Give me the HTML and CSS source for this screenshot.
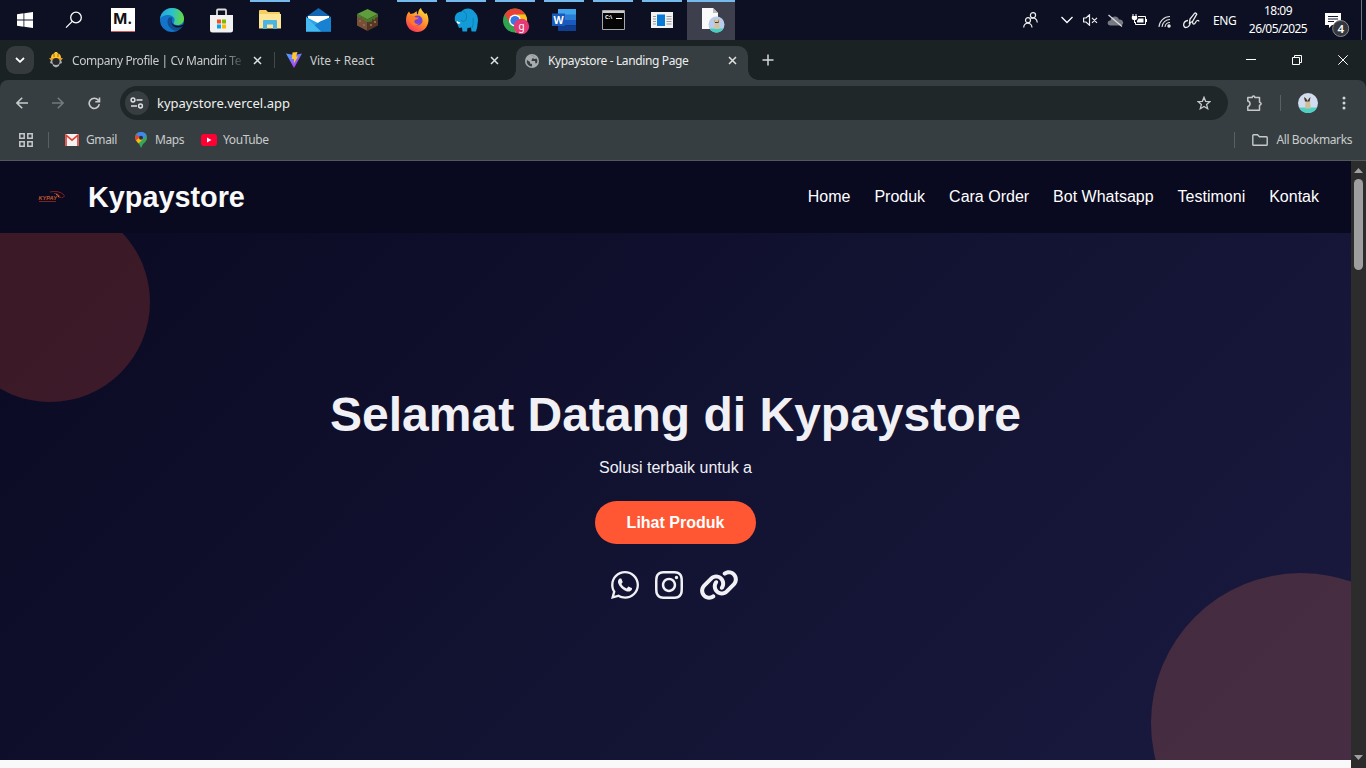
FILE: index.html
```html
<!DOCTYPE html>
<html lang="id">
<head>
<meta charset="utf-8">
<title>Kypaystore - Landing Page</title>
<link rel="stylesheet" href="styles.css">
</head>
<body>
<div class="taskbar">
  <div class="apps">
    <div class="app"><svg width="16" height="16" viewBox="0 0 16 16" fill="#fff"><path d="M0 2.3 6.5 1.3V7.6H0zM7.3 1.2 16 0V7.6H7.3zM0 8.4H6.5V14.7L0 13.8zM7.3 8.4H16V16L7.3 14.8z"/></svg></div>
    <div class="app"><svg width="18" height="18" viewBox="0 0 18 18" fill="none" stroke="#fff" stroke-width="1.3"><circle cx="11" cy="6.5" r="5.3"/><path d="M7.2 10.4 1 16.6"/></svg></div>
    <div class="app"><span class="m-logo">M.</span></div>
    <div class="app"><svg width="24" height="24" viewBox="0 0 24 24"><defs><linearGradient id="eg" x1="0" y1=".3" x2="1" y2=".4"><stop offset="0" stop-color="#25a5dd"/><stop offset=".5" stop-color="#2bc2c9"/><stop offset="1" stop-color="#64d83f"/></linearGradient></defs><circle cx="12" cy="12" r="12" fill="#1474c8"/><path d="M0 11C1 4 6 0 12 0c7 0 12 5 12 10.500 0 4-3 6.500-6.500 6.500-3 0-4.500-1.500-3.500-3 2-3-1-7-5.500-7C4 7 1 9 0 11z" fill="url(#eg)"/><path d="M8.500 10C5 16 11 23 17 22.800c3-1.200 4.500-3 5.700-4.700-5 2.500-11 .8-11.400-4.600-.1-1.600.5-2.700 1.200-3.500C11 9 9.500 9 8.500 10z" fill="#104d94"/><path d="M12.800 10c-1.600 1.500-1.600 5 1 6.700 2.400 1.600 6 1.300 8.800-.2l.9.800-.8 1c-5 3-11 .5-11.400-4.500-.1-1.600.5-3 1.500-3.800z" fill="#0c1229"/></svg></div>
    <div class="app"><svg width="24" height="25" viewBox="0 0 24 25"><path d="M8 8V2.500Q8 1.500 9 1.500H16Q17 1.500 17 2.500V8" fill="none" stroke="#ddd" stroke-width="1.800"/><path d="M1 7H24V22Q24 24.500 21.500 24.500H3.500Q1 24.500 1 22z" fill="#f1f1f1"/><path d="M8 11.500h4v4H8z" fill="#f25022"/><path d="M13 11.500h4v4h-4z" fill="#7fba00"/><path d="M8 16.500h4v4H8z" fill="#00a4ef"/><path d="M13 16.500h4v4h-4z" fill="#ffb900"/></svg></div>
    <div class="app open"><svg width="22" height="20" viewBox="0 0 22 20"><path d="M0 1Q0 0 1 0H7L9 2H20Q21 2 21 3V18H0z" fill="#f6ce60"/><path d="M0 4H22V18.500H0z" fill="#ffe696"/><path d="M4 19V11Q4 10 5 10H17Q18 10 18 11V19H14V14.500H8V19z" fill="#4bb4e0"/></svg></div>
    <div class="app"><svg width="25" height="24" viewBox="0 0 25 24"><path d="M0 9 12.500 0 25 9z" fill="#1467b4"/><path d="M2 8H23V15H2z" fill="#fff"/><path d="M0 9 12 15 25 9V23.500H0z" fill="#29a5e8"/><path d="M0 23.500 14 13.500 25 9V23.500z" fill="#1782d2"/><path d="M0 9 15 23.500H0z" fill="#45baf0"/></svg></div>
    <div class="app"><svg width="21" height="22" viewBox="0 0 21 22"><path d="M0 5 10.500 0 21 5 10.500 10.500z" fill="#5f9c3c"/><path d="M0 5 10.500 10.500V22L0 16.500z" fill="#785038"/><path d="M21 5 10.500 10.500V22L21 16.500z" fill="#543623"/><path d="M0 5 10.500 10.500 21 5V8L18 9V11L15 10V12.500L10.500 13 8 12V10.500L5 10.500V8L2 9 0 7z" fill="#477b2c"/><path d="M2 11h2v2H2zM6 15h2v2H6zM13 17h2v-2h-2zM17 12h2v2h-2z" fill="#8e6a4d"/></svg></div>
    <div class="app open"><svg width="24" height="24" viewBox="0 0 24 24"><defs><linearGradient id="fg" x1=".8" y1="0" x2=".2" y2="1"><stop offset="0" stop-color="#ffe13a"/><stop offset=".5" stop-color="#ff8a2b"/><stop offset="1" stop-color="#f7305d"/></linearGradient></defs><path d="M1 12C1 8.500 2 5.500 4 3.500L5.500 6 9 5.300C10 4 11 3.500 12 3.500 11.500 5 12 6 13 6.500 13 3.500 14 1 16 0c.5 3 3 4 4 6l1.500-1C23 8 23.500 10 23.500 12.500 23 19.500 18 24 12.300 24 6 24 1 19 1 12z" fill="url(#fg)"/><circle cx="12.500" cy="12.500" r="5" fill="#7542d6"/><path d="M4 8C7 6.500 9 8 11 9.500H14C13 11 11.500 11.500 10 12 8 14 11 17 14 15.500 11 19.500 4 17.500 4 8z" fill="#ff7a2c"/></svg></div>
    <div class="app open"><svg width="25" height="24" viewBox="0 0 25 24"><path d="M1 13C0 7 3 4 7.500 3.500 10-.5 18-1 20.500 4c3.500 3 4 8 3 12 0 3-1 5-1.500 7.500H17.500L17 19.500 13.500 20 13 23.500H8.500L8 19.500 5 20 3 15z" fill="#139bd7"/><path d="M9 3Q14 5 12 12 9 15 7 12M19 10Q20 16 18 20" fill="none" stroke="#0c78ad" stroke-width=".8"/><path d="M3 13.500Q4.500 16 6 14.500" stroke="#fff" stroke-width="1.500" fill="none"/></svg></div>
    <div class="app open"><svg class="shift" width="27" height="27" viewBox="0 0 27 27"><circle cx="12" cy="12.500" r="12" fill="#31a350"/><path d="M1.600 6.500A12 12 0 0 1 22.400 6.500L12 7 7 15z" fill="#e94235"/><path d="M22.400 6.500A12 12 0 0 1 12 24.500L17.500 14 14 6.500z" fill="#fbc116"/><circle cx="12" cy="12.500" r="6" fill="#fff"/><circle cx="12" cy="12.500" r="4.600" fill="#3478e6"/><circle cx="18.500" cy="18.500" r="7.700" fill="#e43b77"/><text x="18.500" y="21.500" text-anchor="middle" font-size="10" fill="#fff">g</text></svg></div>
    <div class="app open"><svg width="24" height="22" viewBox="0 0 24 22"><path d="M6 0H24V6H6z" fill="#41a5ee"/><path d="M6 5.500H24V11H6z" fill="#2b7cd3"/><path d="M6 11H24V16.500H6z" fill="#185abd"/><path d="M6 16.500H24V22H6z" fill="#103f91"/><path d="M0 4.500H13V17H0z" fill="#185abd"/><text x="6.500" y="14.500" text-anchor="middle" font-size="10.500" font-weight="700" fill="#fff">W</text></svg></div>
    <div class="app open"><svg width="23" height="20" viewBox="0 0 23 20"><path d="M.5.500H22.500V19.500H.5z" fill="#050505" stroke="#a8a8a8"/><path d="M1 1H22V3H1z" fill="#ccc"/><text x="3" y="9" font-size="5.500" font-weight="700" fill="#fff">C:\</text><path d="M14 8.500h6" stroke="#fff"/></svg></div>
    <div class="app open"><svg width="22" height="16" viewBox="0 0 22 16"><path d="M0 0H22V16H0z" fill="#f2f2f2"/><path d="M6 2.500H14V14H6z" fill="#0879d6"/><path d="M2 4.500h3M2 7h3M2 9.500h3M2 12h3M15.500 4.500h5M15.500 7h5M15.500 9.500h5M15.500 12h5" stroke="#999"/></svg></div>
    <div class="app open active"><svg class="doc" width="24" height="25" viewBox="0 0 24 25"><path d="M1 0H12L17 5V21H1z" fill="#fafafa"/><path d="M12 0V5H17z" fill="#bbb"/><circle cx="15.500" cy="16.500" r="8" fill="#b9cce9"/><path d="M8.500 20.500H22.500A8 8 0 0 1 8.500 20.500z" fill="#45cec2"/><path d="M12 10 14 12H17L19 10 18 15 18.500 21H13L14 15z" fill="#d5c29d"/><path d="M13 11 14 14H17L18 11 17.500 15H14z" fill="#49392f"/></svg></div>
  </div>
  <div class="tray">
    <svg class="people" width="15" height="16" viewBox="0 0 15 16" fill="none" stroke="#eee" stroke-width="1.200"><circle cx="10" cy="3.200" r="2.600"/><circle cx="5" cy="8.200" r="2.500"/><path d="M.7 15.500C1 9.800 8.500 9.800 9 15.500M8.300 6.500C11 5 14 6.500 14.300 10.500"/></svg>
    <svg class="chev" width="12" height="8" viewBox="0 0 12 8" fill="none" stroke="#fff" stroke-width="1.300"><path d="M.5 1 6 6.500 11.500 1"/></svg>
    <svg class="vol" width="15" height="12" viewBox="0 0 15 12" fill="none" stroke="#eee" stroke-width="1.200"><path d="M.6 4H3L6.500.8V11.200L3 8H.6zM9 3.800l5 5M14 3.800l-5 5"/></svg>
    <svg class="cloud" width="17" height="13" viewBox="0 0 17 13"><path d="M3.500 11.500C-.5 11.500 0 6 3.500 6.500 4 1.500 11 1 12 5.500c5-.5 5.500 6 1.500 6z" fill="#777a83"/><path d="M1.500 1 15 12.500" stroke="#ddd" stroke-width="1.200"/></svg>
    <svg class="bat" width="16" height="13" viewBox="0 0 16 13"><path d="M7 2.500H14.500V10.500H4.500V8M15.500 5v3M1 2.500h5M2 0v2.500M5 0v2.500M3.500 5v4" fill="none" stroke="#fff"/><path d="M.8 2.500H6.200V4.500Q6 6.300 3.500 6.300T.8 4.500zM7.500 4.500H12.500V8.500H6V7z" fill="#fff"/></svg>
    <svg class="wifi" width="13" height="13" viewBox="0 0 13 13" fill="none" stroke="#ddd" stroke-width="1.100"><path d="M1 12A11 11 0 0 1 12 1.500M4 12A8 8 0 0 1 12 4.500M7 12A5 5 0 0 1 12 7.500"/><circle cx="11" cy="11" r="1.200" fill="#fff"/></svg>
    <svg class="pen" width="17" height="17" viewBox="0 0 17 17" fill="none" stroke="#eee" stroke-width="1.300"><path d="M6.500 11 7 7 11.300 1.600Q13 .2 13.800 2.200L9.500 9.500zM5 8.500C-.5 9 0 15.200 2.500 15.500 6 15.500 7 13 7.500 10M9.500 9.500C9.500 13 11.500 12.500 12.500 10.500 13.500 8.500 15.500 7.500 16 9.500"/></svg>
    <span class="lang">ENG</span>
    <div class="clock"><span>18:09</span><span>26/05/2025</span></div>
    <svg class="notif" width="25" height="25" viewBox="0 0 25 25"><path d="M0 0H16V12H7L4 15V12H0z" fill="#fff"/><path d="M3 3.500h10M3 6h10M3 8.500h6" stroke="#151a30"/><circle cx="15.700" cy="15.500" r="8" fill="#35373e" stroke="#888"/><text x="15.700" y="19.800" text-anchor="middle" font-size="11.500" font-weight="600" fill="#fff">4</text></svg>
    <i class="peek"></i>
  </div>
</div>

<div class="tabs">
  <div class="tabsearch"><svg width="10" height="6" viewBox="0 0 10 6" fill="none" stroke="#fff" stroke-width="1.800"><path d="M1 1 5 4.800 9 1"/></svg></div>
  <div class="tab t1"><svg width="14" height="16" viewBox="0 0 14 16"><path d="M2 6Q2 2 5 1.500L6 0H8L9 1.500Q12 2 12 6z" fill="#ffc52b"/><path d="M5 2V5M9 2V5" stroke="#a8621c"/><path d="M0 6H14L12 8.500H2z" fill="#f09c24"/><path d="M2 8H12L13 11 10.500 12 10 14 7 15.500 4 14 3.500 12 1 11z" fill="#aab1b4"/><circle cx="7" cy="9.500" r="3.600" fill="#26292a"/></svg><span class="title fade">Company Profile | Cv Mandiri Te</span><svg class="x" width="9" height="9" viewBox="0 0 9 9"><path d="M1 1 8 8M8 1 1 8"/></svg></div>
  <i class="tabsep"></i>
  <div class="tab t2"><svg width="16" height="16" viewBox="0 0 16 16"><defs><linearGradient id="vg" x1="0" y1="0" x2=".6" y2="1"><stop offset="0" stop-color="#41a9ff"/><stop offset="1" stop-color="#bd34fe"/></linearGradient></defs><path d="M0 1.500 8 3 16 1.500 8 16z" fill="url(#vg)"/><path d="M6.500.5 11.500 0 10 4.500H12L7.800 11.500 8 7H5.800z" fill="#ffc72d"/></svg><span class="title">Vite + React</span><svg class="x" width="9" height="9" viewBox="0 0 9 9"><path d="M1 1 8 8M8 1 1 8"/></svg></div>
  <div class="tab t3"><svg width="14" height="14" viewBox="0 0 14 14"><circle cx="7" cy="7" r="7" fill="#a7acae"/><path d="M2 6 5 8V9.500L7 10V12.500C3.500 12.500 1 9.500 2 6zM6 2Q9 1 9 3L7 5 6.500 7H10L10.500 9.500 12 9Q13 6 11.500 4.500L9 5 8 4 9.500 2z" fill="#373e41"/></svg><span class="title">Kypaystore - Landing Page</span><svg class="x" width="9" height="9" viewBox="0 0 9 9"><path d="M1 1 8 8M8 1 1 8"/></svg></div>
  <svg class="plus" width="12" height="12" viewBox="0 0 12 12"><path d="M6 .5V11.500M.5 6H11.500" stroke="#d5d8d8" stroke-width="1.500"/></svg>
  <div class="winctl">
    <svg width="10" height="10" viewBox="0 0 10 10"><path d="M0 4.500H10"/></svg>
    <svg width="10" height="10" viewBox="0 0 10 10"><path d="M.5 2.500H7.500V9.500H.5zM2.500 2.500V.5H9.500V7.500H7.500"/></svg>
    <svg width="10" height="10" viewBox="0 0 10 10"><path d="M.3.300 9.700 9.700M9.700.300.3 9.700"/></svg>
  </div>
</div>

<div class="chrome">
  <div class="toolbar">
    <div class="navbtns">
      <svg width="12" height="12" viewBox="0 0 12 12"><path d="M12 6H1M6.200.700.9 6 6.200 11.300"/></svg>
      <svg class="dim" width="12" height="12" viewBox="0 0 12 12"><path d="M0 6H11M5.800.700 11.100 6 5.800 11.300"/></svg>
      <svg width="13" height="13" viewBox="0 0 13 13"><path d="M11.300 7.200A5.100 5.100 0 1 1 10.300 3.200L11.500 4.600M11.500.5V4.800H7.300"/></svg>
    </div>
    <div class="omni">
      <span class="site"><svg width="14" height="12" viewBox="0 0 14 12" fill="none" stroke="#dde0e0" stroke-width="1.500"><circle cx="3" cy="3" r="1.900"/><path d="M6.500 3H12.500M1 9H7"/><circle cx="10.500" cy="9" r="1.900"/></svg></span>
      <span class="url">kypaystore.vercel.app</span>
      <svg class="star" width="14" height="14" viewBox="0 0 14 14" fill="none" stroke="#c5c9ca" stroke-width="1.300"><path d="M7 1.300 8.600 5.300 12.900 5.600 9.600 8.400 10.700 12.700 7 10.400 3.300 12.700 4.400 8.400 1.100 5.600 5.400 5.300z"/></svg>
    </div>
    <svg class="ext" width="17" height="17" viewBox="0 0 17 17" fill="none" stroke="#c5c9ca" stroke-width="1.500" stroke-linejoin="round"><path d="M1.800 2.500H6.200V2Q7.500.2 8.800 2V2.500H13.500V7.300H14Q16.300 8.700 14 10.200H13.500V15.200H1.800V11.600Q4 11 4 8.800T1.800 6z"/></svg>
    <i class="sep"></i>
    <svg class="avatar" width="20" height="20" viewBox="0 0 20 20"><circle cx="10" cy="10" r="10" fill="#d1dcf0"/><path d="M1 14.500H19A10 10 0 0 1 1 14.500z" fill="#50d0c4"/><path d="M6 4 8.500 6.500H10.500L12.500 4 12 9 13 15.500H7L7.500 9z" fill="#d0be9b"/><path d="M6 4 8 5.500 9.500 8 11 5.500 12.500 4 11.500 8.500H7z" fill="#40352c"/></svg>
    <svg class="dots" width="4" height="14" viewBox="0 0 4 14" fill="#d2d5d5"><circle cx="2" cy="2" r="1.500"/><circle cx="2" cy="7" r="1.500"/><circle cx="2" cy="12" r="1.500"/></svg>
  </div>
  <div class="bookmarks">
    <svg width="14" height="14" viewBox="0 0 14 14" fill="none" stroke="#c5c9ca" stroke-width="1.500"><path d="M.8.800H5.200V5.200H.8zM8.800.800H13.200V5.200H8.800zM.8 8.800H5.200V13.200H.8zM8.800 8.800H13.200V13.200H8.800z"/></svg>
    <i class="sep"></i>
    <span class="bm b1"><svg width="14" height="12" viewBox="0 0 14 12"><path d="M0 0H14V12H0z" fill="#f4f1f1"/><path d="M1 12V1.200L7 6.200 13 1.200V12" fill="none" stroke="#d8453b" stroke-width="1.700"/></svg>Gmail</span>
    <span class="bm b2"><svg width="12" height="16" viewBox="0 0 12 16"><path d="M6 0Q12 0 12 6 12 9 8 12L6 16Q5 12 2 9.500 0 7 0 5.500 0 0 6 0z" fill="#34a853"/><path d="M1 3Q3 0 6 0 10 0 11.500 3.500L4 11 1.500 9z" fill="#4285f4"/><path d="M1.500 2.500 5 5.500 1 9Q-1 5 1.500 2.500z" fill="#ea4335"/><path d="M1 8.500 5 5 8 7 3.500 11.500z" fill="#fbbc04"/><circle cx="6" cy="5.700" r="2" fill="#283239"/></svg>Maps</span>
    <span class="bm b3"><svg width="16" height="12" viewBox="0 0 16 12"><rect width="16" height="12" rx="3" fill="#ff0033"/><path d="M6 3.500V8.500L10.500 6z" fill="#fff"/></svg>YouTube</span>
    <div class="allbm"><i class="sep"></i><svg width="16" height="12" viewBox="0 0 16 12" fill="none" stroke="#c5c9ca" stroke-width="1.400"><path d="M.8 1.500Q.8.700 1.500.7H5.500L7.500 2.700H14.500Q15.200 2.700 15.200 3.500V10.500Q15.200 11.300 14.500 11.300H1.500Q.8 11.300.8 10.500z"/></svg><span>All Bookmarks</span></div>
  </div>
</div>

<div class="viewport">
  <div class="page">
    <header class="navbar">
      <svg class="logo" width="30" height="14" viewBox="0 0 30 14"><text x="1.500" y="9.800" font-size="5.600" font-weight="700" font-style="italic" fill="#c45a2d">KYPAY</text><path d="M13 2Q22 0 27 5M17 3.500Q22 3 23.500 8M2 11.500H19M24.500 8Q26 7.500 28 5.500" fill="none" stroke="#8c261f" stroke-width=".9"/><path d="M19 4.500Q21 4 22 7.500" stroke="#d37a38" fill="none"/></svg>
      <h2 class="brand">Kypaystore</h2>
      <nav class="links"><a>Home</a><a>Produk</a><a>Cara Order</a><a>Bot Whatsapp</a><a>Testimoni</a><a>Kontak</a></nav>
    </header>
    <section class="hero">
      <i class="circle c1"></i><i class="circle c2"></i>
      <h1>Selamat Datang di Kypaystore</h1>
      <p>Solusi terbaik untuk a</p>
      <a class="btn">Lihat Produk</a>
      <div class="social">
        <svg width="28" height="32" viewBox="0 0 448 512"><path d="M380.900 97.100C339 55.100 283.200 32 223.900 32c-122.400 0-222 99.600-222 222 0 39.100 10.200 77.300 29.600 111L0 480l117.700-30.900c32.400 17.700 68.900 27 106.100 27h.1c122.300 0 224.100-99.600 224.100-222 0-59.300-25.200-115-67.100-157zm-157 341.600c-33.200 0-65.700-8.900-94-25.700l-6.700-4-69.800 18.300L72 359.200l-4.400-7c-18.500-29.400-28.200-63.300-28.200-98.200 0-101.700 82.800-184.500 184.600-184.500 49.300 0 95.600 19.200 130.400 54.100 34.800 34.900 56.200 81.200 56.100 130.500 0 101.800-84.900 184.600-186.600 184.600zm101.200-138.200c-5.500-2.800-32.800-16.200-37.900-18-5.100-1.900-8.800-2.800-12.500 2.800-3.700 5.600-14.300 18-17.600 21.800-3.200 3.700-6.500 4.200-12 1.400-32.600-16.300-54-29.100-75.500-66-5.700-9.800 5.700-9.100 16.300-30.300 1.800-3.700.9-6.900-.5-9.700-1.400-2.800-12.500-30.100-17.100-41.200-4.500-10.800-9.100-9.300-12.500-9.500-3.200-.2-6.900-.2-10.600-.2-3.700 0-9.700 1.400-14.800 6.900-5.100 5.600-19.400 19-19.400 46.300 0 27.300 19.900 53.700 22.600 57.400 2.800 3.700 39.100 59.700 94.800 83.800 35.200 15.200 49 16.500 66.600 13.900 10.700-1.600 32.800-13.400 37.400-26.400 4.600-13 4.600-24.100 3.200-26.400-1.300-2.500-5-3.900-10.500-6.600z"/></svg>
        <svg width="28" height="32" viewBox="0 0 448 512"><path d="M224.100 141c-63.600 0-114.900 51.300-114.900 114.900s51.300 114.900 114.900 114.900S339 319.500 339 255.900 287.700 141 224.100 141zm0 189.600c-41.100 0-74.700-33.500-74.700-74.700s33.500-74.700 74.700-74.700 74.700 33.500 74.700 74.700-33.600 74.700-74.700 74.700zm146.400-194.300c0 14.900-12 26.800-26.800 26.800-14.900 0-26.800-12-26.800-26.800s12-26.800 26.800-26.800 26.800 12 26.800 26.800zm76.100 27.200c-1.700-35.900-9.900-67.700-36.200-93.900-26.200-26.200-58-34.400-93.900-36.200-37-2.100-147.900-2.100-184.900 0-35.800 1.700-67.600 9.900-93.900 36.100s-34.400 58-36.200 93.900c-2.100 37-2.100 147.900 0 184.900 1.700 35.900 9.900 67.700 36.200 93.900s58 34.400 93.900 36.200c37 2.100 147.900 2.100 184.900 0 35.900-1.700 67.700-9.900 93.900-36.200 26.200-26.200 34.400-58 36.200-93.900 2.100-37 2.100-147.800 0-184.800zM398.800 388c-7.800 19.600-22.900 34.700-42.600 42.600-29.500 11.700-99.500 9-132.100 9s-102.700 2.600-132.100-9c-19.600-7.800-34.700-22.900-42.600-42.600-11.700-29.500-9-99.500-9-132.100s-2.600-102.700 9-132.100c7.800-19.600 22.900-34.700 42.600-42.600 29.500-11.700 99.500-9 132.100-9s102.700-2.600 132.100 9c19.600 7.800 34.700 22.900 42.600 42.600 11.700 29.500 9 99.500 9 132.100s2.700 102.700-9 132.100z"/></svg>
        <svg width="40" height="32" viewBox="0 0 640 512"><path d="M579.800 267.700c56.500-56.500 56.500-148 0-204.500c-50-50-128.800-56.500-186.300-15.400l-1.600 1.100c-14.400 10.300-17.700 30.300-7.400 44.600s30.300 17.700 44.600 7.400l1.600-1.100c32.100-22.900 76-19.300 103.800 8.600c31.500 31.500 31.500 82.500 0 114L422.300 334.800c-31.500 31.500-82.500 31.500-114 0c-27.900-27.900-31.500-71.800-8.600-103.800l1.100-1.600c10.300-14.400 6.900-34.400-7.400-44.600s-34.400-6.900-44.600 7.400l-1.100 1.600C206.500 251.200 213 330 263 380c56.500 56.500 148 56.500 204.500 0L579.800 267.700zM60.200 244.300c-56.500 56.500-56.500 148 0 204.500c50 50 128.800 56.500 186.300 15.400l1.600-1.100c14.400-10.300 17.700-30.300 7.400-44.600s-30.300-17.700-44.600-7.400l-1.600 1.100c-32.100 22.900-76 19.300-103.800-8.600C74 372 74 321 105.500 289.500L217.700 177.200c31.500-31.500 82.500-31.500 114 0c27.900 27.900 31.500 71.800 8.600 103.900l-1.100 1.600c-10.300 14.400-6.900 34.400 7.400 44.600s34.400 6.900 44.600-7.400l1.100-1.600C433.500 260.800 427 182 377 132c-56.500-56.500-148-56.500-204.500 0L60.200 244.300z"/></svg>
      </div>
    </section>
  </div>
  <div class="scroll">
    <svg width="9" height="5" viewBox="0 0 9 5" fill="#a0a0a0"><path d="M0 5 4.500 0 9 5z"/></svg>
    <i class="thumb"></i>
    <svg class="down" width="9" height="5" viewBox="0 0 9 5" fill="#a0a0a0"><path d="M0 0 4.500 5 9 0z"/></svg>
  </div>
</div>
</body>
</html>
```
FILE: styles.css
```css
* { box-sizing: border-box; }
body { margin: 0; width: 1366px; height: 768px; overflow: hidden; display: flex; flex-direction: column; font-family: "Noto Sans", "Open Sans", sans-serif; font-size: 12px; color: #e3e5e5; background: #1b2224; }
svg { flex: none; display: block; }
i { display: block; flex: none; }

.taskbar { height: 40px; flex: none; background: #0c1022; display: flex; justify-content: space-between; }
.apps { display: flex; gap: 1.050px; padding-left: .6px; }
.app { width: 48px; height: 40px; display: flex; align-items: center; justify-content: center; }
.app.open { background: linear-gradient(#76b9ed, #76b9ed) center top / 40px 2px no-repeat; }
.app.active { background: linear-gradient(#76b9ed, #76b9ed) center top / 48px 2px no-repeat, #3d3f4c; }
.shift { margin: 2px 0 0 3px; }
.doc { margin: 1px 0 0 4px; }
.m-logo { width: 24px; height: 24px; background: #fff; color: #111; border-bottom: 1px solid #e25555; font: 700 15px/22px Inter, sans-serif; text-align: center; }
.tray { display: flex; align-items: center; color: #fff; }
.chev { margin-left: 23px; }
.vol { margin-left: 10px; }
.cloud { margin-left: 9px; }
.bat { margin-left: 7px; }
.wifi { margin-left: 11px; margin-top: 2px; }
.pen { margin-left: 12px; }
.lang { margin-left: 13px; width: 24px; letter-spacing: -.4px; }
.clock { width: 60px; margin-left: 11px; display: flex; flex-direction: column; align-items: center; line-height: 18px; letter-spacing: -.55px; white-space: nowrap; }
.notif { margin: 10px 0 0 17px; }
.peek { width: 1px; height: 40px; background: #70727d; margin: 0 4px 0 11px; }

.tabs { height: 40px; flex: none; display: flex; align-items: center; background: #1b2224; }
.tabsearch { width: 28px; height: 28px; margin: 0 0 0 6px; border-radius: 9px; background: #353b3d; display: flex; align-items: center; justify-content: center; }
.tab { height: 34px; display: flex; align-items: center; }
.title { flex: 1; margin-left: 9px; white-space: nowrap; color: #c8cccc; letter-spacing: -.37px; line-height: 18px; padding-top: 1px; }
.fade { -webkit-mask-image: linear-gradient(90deg, #000 88%, transparent 103%); mask-image: linear-gradient(90deg, #000 88%, transparent 103%); letter-spacing: -.42px; }
.x { fill: none; stroke: #dfe2e2; stroke-width: 1.500; }
.t1 { width: 212px; margin-left: 15px; }
.t1 .x { margin-left: 12px; }
.tabsep { width: 1px; height: 16px; background: #43494b; margin-left: 13px; }
.t2 { width: 213px; margin-left: 11px; }
.t2 .title { margin-left: 8px; letter-spacing: -.1px; }
.t3 { align-self: flex-end; width: 232px; margin-left: 17px; padding: 0 11px 5px 9px; background: #373e41; border-radius: 10px 10px 0 0; position: relative; }
.t3::before, .t3::after { content: ""; position: absolute; bottom: 0; width: 10px; height: 10px; }
.t3::before { left: -10px; background: radial-gradient(circle at 0 0, transparent 9.500px, #373e41 10px); }
.t3::after { right: -10px; background: radial-gradient(circle at 100% 0, transparent 9.500px, #373e41 10px); }
.t3 .title { color: #eceeee; padding-top: 0; }
.plus { margin-left: 14px; }
.winctl { margin-left: auto; display: flex; gap: 36px; padding-right: 18px; fill: none; stroke: #fff; stroke-width: 1; }

.chrome { height: 81px; flex: none; background: #373e41; border-bottom: 1px solid #53595b; border-top-right-radius: 8px; border-top-left-radius: 8px; }
.toolbar { height: 46px; display: flex; align-items: center; }
.navbtns { width: 120px; padding-left: 16px; display: flex; align-items: center; gap: 24px; fill: none; stroke: #c8cccc; stroke-width: 1.600; }
.dim { stroke: #727a7c; }
.omni { width: 1108px; height: 34px; border-radius: 17px; background: #202729; display: flex; align-items: center; padding: 0 17px 0 5px; }
.site { width: 24px; height: 24px; border-radius: 50%; background: #373e41; display: flex; align-items: center; justify-content: center; }
.url { margin-left: 8px; flex: 1; font-size: 13px; color: #eef0f0; letter-spacing: 0; }
.ext { margin-left: 18px; }
.sep { width: 1px; height: 16px; background: #596062; }
.toolbar > .sep { margin-left: 17px; }
.avatar { margin-left: 17px; }
.dots { margin-left: 24px; }
.bookmarks { height: 28px; display: flex; align-items: center; padding: 0 14px 0 19px; color: #c8cccc; letter-spacing: -.4px; line-height: 16px; }
.bookmarks > .sep { margin-left: 15px; }
.bm { display: flex; align-items: center; }
.bm svg { margin-right: 7px; }
.b1 { margin-left: 16px; width: 70px; }
.b2 { width: 66px; }
.b2 svg { margin-right: 8px; }
.b3 svg { margin-right: 6px; }
.allbm { margin-left: auto; display: flex; align-items: center; }
.allbm svg { margin: 0 8px 0 17px; }

.viewport { flex: 1; display: flex; min-height: 0; font-family: "Liberation Sans", Arial, sans-serif; }
.page { width: 1351px; background: #f9f9f9; display: flex; flex-direction: column; }
.navbar { height: 72px; flex: none; display: flex; align-items: center; padding: 0 32px 0 37px; background: #090920; color: #fff; }
.brand { margin: 0 0 0 21px; font-size: 28.800px; line-height: 36px; color: #f9f9f9; }
.links { margin-left: auto; display: flex; gap: 24px; font-size: 16px; line-height: 20px; }
.hero { height: 527px; flex: none; position: relative; overflow: hidden; display: flex; flex-direction: column; align-items: center; background: linear-gradient(135deg, #0a0a23, #1a1a40); color: #f0f0f5; padding-top: 153px; }
.circle { position: absolute; border-radius: 50%; opacity: .2; }
.c1 { width: 200px; height: 200px; left: -50px; top: -31px; background: #ff5733; }
.c2 { width: 300px; height: 300px; right: -100px; bottom: -113px; background: #ff7f50; }
.hero h1 { margin: 0; font-size: 48px; line-height: 58px; }
.hero p { margin: 14px 0 0; font-size: 16px; line-height: 20px; }
.btn { margin-top: 23px; width: 161px; height: 43px; border-radius: 22px; background: #ff5733; color: #fff; font-size: 16px; font-weight: 700; line-height: 43px; text-align: center; }
.social { margin-top: 25px; padding-right: 1px; display: flex; gap: 16px; fill: #f0f0f5; }
.scroll { width: 15px; background: #2c2c2c; display: flex; flex-direction: column; align-items: center; padding: 7px 0 8px; }
.thumb { width: 9px; height: 91px; margin-top: 6px; border-radius: 5px; background: #9f9f9f; }
.down { margin-top: auto; }
```
